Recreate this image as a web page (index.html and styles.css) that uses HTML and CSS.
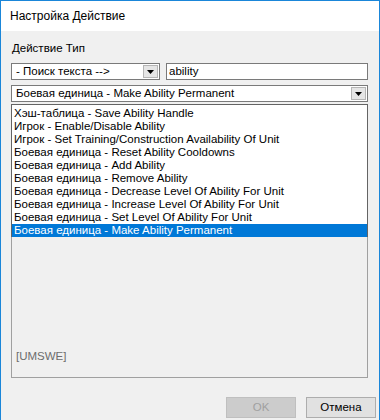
FILE: index.html
```html
<!DOCTYPE html>
<html>
<head>
<meta charset="utf-8">
<link rel="stylesheet" href="styles.css">
</head>
<body>
<div class="window">
  <div class="titlebar">Настройка Действие</div>
  <div class="content">
    <div class="label">Действие Тип</div>
    <div class="row">
      <div class="combo combo-search">
        <span class="combo-text">- Поиск текста --&gt;</span>
        <span class="drop"><svg width="7" height="4" viewBox="0 0 7 4"><path d="M0 0h7L3.5 4z" fill="#000"/></svg></span>
      </div>
      <div class="textbox">ability</div>
    </div>
    <div class="row row2">
      <div class="combo combo-full">
        <span class="combo-text">Боевая единица - Make Ability Permanent</span>
        <span class="drop"><svg width="7" height="4" viewBox="0 0 7 4"><path d="M0 0h7L3.5 4z" fill="#000"/></svg></span>
      </div>
    </div>
    <div class="listbox">
      <div class="item">Хэш-таблица - Save Ability Handle</div>
      <div class="item">Игрок - Enable/Disable Ability</div>
      <div class="item">Игрок - Set Training/Construction Availability Of Unit</div>
      <div class="item">Боевая единица - Reset Ability Cooldowns</div>
      <div class="item">Боевая единица - Add Ability</div>
      <div class="item">Боевая единица - Remove Ability</div>
      <div class="item">Боевая единица - Decrease Level Of Ability For Unit</div>
      <div class="item">Боевая единица - Increase Level Of Ability For Unit</div>
      <div class="item">Боевая единица - Set Level Of Ability For Unit</div>
      <div class="item selected">Боевая единица - Make Ability Permanent</div>
    </div>
    <div class="desc"><span class="desc-text">[UMSWE]</span></div>
    <div class="footer">
      <div class="btn disabled">OK</div>
      <div class="btn">Отмена</div>
    </div>
  </div>
</div>
</body>
</html>
```
FILE: styles.css
```css
html, body {
  margin: 0;
  padding: 0;
  width: 380px;
  height: 420px;
  overflow: hidden;
  background: #f0f0f0;
}
.window {
  width: 380px;
  height: 420px;
  box-sizing: border-box;
  border: 1px solid #1a86d9;
  border-bottom: none;
  background: #f0f0f0;
  font-family: "Liberation Sans", Arial, sans-serif;
  font-size: 11.5px;
  color: #000;
}
.titlebar {
  height: 30px;
  background: #fff;
  font-family: "Liberation Sans", Arial, sans-serif;
  font-size: 12px;
  line-height: 30px;
  padding-left: 9px;
  color: #000;
}
.content {
  padding: 11px 10px 0 10px;
}
.label {
  line-height: 13px;
  height: 13px;
  margin-bottom: 8px;
  padding-left: 1px;
}
.row {
  display: flex;
  gap: 6px;
  height: 17px;
}
.row2 {
  margin-top: 5px;
}
.combo {
  box-sizing: border-box;
  height: 17px;
  border: 1px solid #7a7a7a;
  background: #fff;
  display: flex;
  align-items: center;
  justify-content: space-between;
  padding: 1px;
}
.combo-search {
  width: 149px;
}
.combo-full {
  width: 357px;
}
.combo-text {
  padding-left: 3px;
  line-height: 13px;
  white-space: nowrap;
}
.drop {
  box-sizing: border-box;
  width: 15px;
  height: 13px;
  background: #e5e5e5;
  border: 1px solid #b5b5b5;
  display: flex;
  align-items: center;
  justify-content: center;
}
.textbox {
  box-sizing: border-box;
  width: 202px;
  height: 17px;
  border: 1px solid #7a7a7a;
  background: #fff;
  line-height: 15px;
  padding-left: 2px;
}
.listbox {
  box-sizing: border-box;
  margin-top: 2px;
  width: 357px;
  border: 1px solid #646464;
  border-bottom: none;
  background: #fff;
  padding-top: 2px;
}
.item {
  height: 13px;
  line-height: 13px;
  padding-left: 2px;
  white-space: nowrap;
}
.item.selected {
  background: #0078d7;
  color: #fff;
}
.desc {
  box-sizing: border-box;
  width: 357px;
  height: 141px;
  border: 1px solid #a0a0a0;
  border-top: none;
  display: flex;
  flex-direction: column;
  justify-content: flex-end;
  padding: 0 0 14px 4px;
}
.desc-text {
  color: #6d6d6d;
  line-height: 13px;
}
.footer {
  display: flex;
  justify-content: flex-end;
  gap: 10px;
  margin-top: 19px;
  margin-right: -7px;
}
.btn {
  box-sizing: border-box;
  width: 70px;
  height: 21px;
  border: 1px solid #adadad;
  background: #e1e1e1;
  text-align: center;
  line-height: 19px;
  font-size: 11.5px;
}
.btn.disabled {
  border-color: #bfbfbf;
  background: #cccccc;
  color: #a0a0a0;
}
```
